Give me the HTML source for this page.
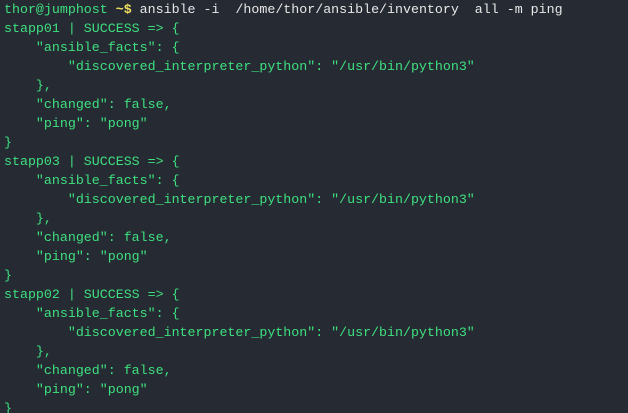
<!DOCTYPE html>
<html><head><style>
html,body{margin:0;padding:0;background:#262a33;width:628px;height:413px;overflow:hidden}
pre{margin:0;padding:0 0 0 4px;position:relative;top:0px;font-family:"Liberation Mono",monospace;font-size:13.3px;line-height:19px;color:#3ee07f;white-space:pre}
.w{color:#e8e8e8}.y{color:#f0e060;font-weight:bold}
</style></head><body><pre>thor@jumphost <span class="y">~$</span> <span class="w">ansible -i  /home/thor/ansible/inventory  all -m ping</span>
stapp01 | SUCCESS =&gt; {
    "ansible_facts": {
        "discovered_interpreter_python": "/usr/bin/python3"
    },
    "changed": false,
    "ping": "pong"
}
stapp03 | SUCCESS =&gt; {
    "ansible_facts": {
        "discovered_interpreter_python": "/usr/bin/python3"
    },
    "changed": false,
    "ping": "pong"
}
stapp02 | SUCCESS =&gt; {
    "ansible_facts": {
        "discovered_interpreter_python": "/usr/bin/python3"
    },
    "changed": false,
    "ping": "pong"
}</pre></body></html>
